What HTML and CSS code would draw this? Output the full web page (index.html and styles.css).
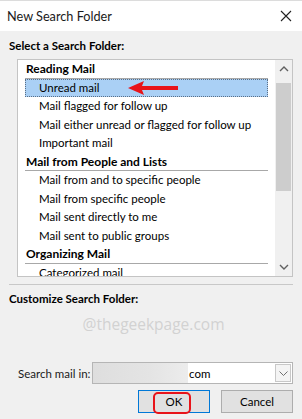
FILE: index.html
```html
<!DOCTYPE html>
<html lang="en">

<head>
    <meta charset="UTF-8">
    <meta name="viewport" content="width=device-width, initial-scale=1.0">
    <title>New Search Folder</title>
    <link rel="stylesheet" href="styles.css">
</head>

<body>
    <header class="titlebar">
        <span class="title">New Search Folder</span>
        <svg class="close" width="12" height="12" viewBox="0 0 12 12">
            <path d="M1 1 L11 11 M11 1 L1 11" stroke="#222" stroke-width="1.1" fill="none" />
        </svg>
    </header>
    <section class="dialog">
        <div class="label">Select a Search Folder:</div>
        <div class="listbox">
            <div class="list">
                <div class="group">Reading Mail</div>
                <div class="item selected">Unread mail
                    <svg class="arrow" width="52" height="14" viewBox="0 0 52 14">
                        <path d="M0 7 L16 0 L14 5 L50 5 L50 9 L14 9 L16 14 Z" fill="#e8141a" />
                    </svg>
                </div>
                <div class="item">Mail flagged for follow up</div>
                <div class="item">Mail either unread or flagged for follow up</div>
                <div class="item">Important mail</div>
                <div class="group">Mail from People and Lists</div>
                <div class="item">Mail from and to specific people</div>
                <div class="item">Mail from specific people</div>
                <div class="item">Mail sent directly to me</div>
                <div class="item">Mail sent to public groups</div>
                <div class="group">Organizing Mail</div>
                <div class="item">Categorized mail</div>
            </div>
            <div class="scrollbar">
                <svg class="sbarrow" width="10" height="6" viewBox="0 0 10 6">
                    <path d="M1 5 L5 1 L9 5" stroke="#606060" stroke-width="1.4" fill="none" />
                </svg>
                <div class="thumb"></div>
                <div class="track"></div>
                <svg class="sbarrow" width="10" height="6" viewBox="0 0 10 6">
                    <path d="M1 1 L5 5 L9 1" stroke="#606060" stroke-width="1.4" fill="none" />
                </svg>
            </div>
        </div>
        <hr class="sep">
        <div class="label">Customize Search Folder:</div>
        <div class="watermark">@thegeekpage.com</div>
        <div class="searchrow">
            <span class="searchlabel">Search mail in:</span>
            <div class="combo">
                <div class="blur"></div>
                <span class="combotext">com</span>
                <div class="dropbtn">
                    <svg width="9" height="5" viewBox="0 0 9 5">
                        <path d="M0.5 0.5 L4.5 4.5 L8.5 0.5" stroke="#707070" stroke-width="1" fill="none" />
                    </svg>
                </div>
            </div>
        </div>
        <div class="buttons">
            <button class="btn ok">OK<span class="mark"></span></button>
            <button class="btn">Cancel</button>
        </div>
    </section>
</body>

</html>
```

FILE: styles.css
```css
body {
    margin: 0;
    background-color: #f0f0f0;
    font-family: Lato, "Noto Sans", sans-serif;
    font-size: 11.5px;
    color: #000;
    width: 302px;
    height: 419px;
    overflow: hidden;
}

.titlebar {
    height: 30px;
    background-color: white;
    border-top: 1px solid #dcdcdc;
    display: flex;
    align-items: center;
    justify-content: space-between;
    padding: 0 10px 0 7px;
}

.title {
    font-size: 12.7px;
    color: #1a1a1a;
}

.dialog {
    padding: 6px 9px 0 9px;
}

.label {
    font-weight: bold;
    font-size: 11.5px;
    height: 18px;
    line-height: 18px;
}

.listbox {
    margin: 4px 0 0 8px;
    height: 216px;
    border: 1px solid #c4c4c4;
    background-color: white;
    display: flex;
}

.list {
    flex: 1;
    overflow: hidden;
    padding: 0 7px 0 7px;
}

.group {
    font-weight: bold;
    font-size: 12px;
    height: 17.5px;
    line-height: 17px;
    border-bottom: 1px solid #a8a8a8;
    padding-left: 1px;
}

.item {
    position: relative;
    height: 18.5px;
    line-height: 18.5px;
    padding-left: 14px;
    white-space: nowrap;
}

.selected {
    background-color: #aad0f5;
    outline: 1px dotted #5a6f87;
    outline-offset: -1px;
}

.arrow {
    position: absolute;
    left: 103px;
    top: 2px;
}

.scrollbar {
    width: 17px;
    background-color: #f0f0f0;
    display: flex;
    flex-direction: column;
    align-items: center;
}

.sbarrow {
    margin: 6px 0;
}

.thumb {
    width: 15px;
    height: 108px;
    background-color: #cdcdcd;
    margin-top: 5px;
}

.track {
    flex: 1;
}

.sep {
    border: none;
    border-top: 1px solid #c8c8c8;
    margin: 7px 0 5px 0;
}

.watermark {
    text-align: center;
    color: #d2d2d2;
    font-size: 15.5px;
    font-family: "Open Sans", sans-serif;
    margin: 5px 0 0 5px;
    height: 22px;
}

.searchrow {
    display: flex;
    align-items: center;
    margin: 27px 0 0 9px;
}

.searchlabel {
    width: 74px;
    white-space: nowrap;
    color: #1a1a1a;
}

.combo {
    flex: 1;
    height: 20px;
    border: 1px solid #b5b5b5;
    background-color: white;
    display: flex;
    align-items: center;
}

.blur {
    width: 95px;
    height: 100%;
    background: linear-gradient(90deg, #dedede, #e4e4e4 60%, #ececec);
}

.combotext {
    flex: 1;
    padding-left: 1px;
}

.dropbtn {
    width: 14px;
    height: 16px;
    border: 1px solid #c8c8c8;
    background-color: #f4f4f4;
    margin-right: 1px;
    display: flex;
    align-items: center;
    justify-content: center;
}

.buttons {
    display: flex;
    justify-content: flex-end;
    gap: 11px;
    margin-top: 6px;
}

.btn {
    position: relative;
    width: 72px;
    height: 23px;
    border: 1px solid #adadad;
    background-color: #e1e1e1;
    font-family: Lato, "Noto Sans", sans-serif;
    font-size: 11.5px;
    padding: 0;
}

.ok {
    border-color: #0078d7;
}

.mark {
    position: absolute;
    left: 14px;
    top: 1px;
    width: 34px;
    height: 18px;
    border: 2px solid #e8141a;
    border-radius: 5px;
}
```
